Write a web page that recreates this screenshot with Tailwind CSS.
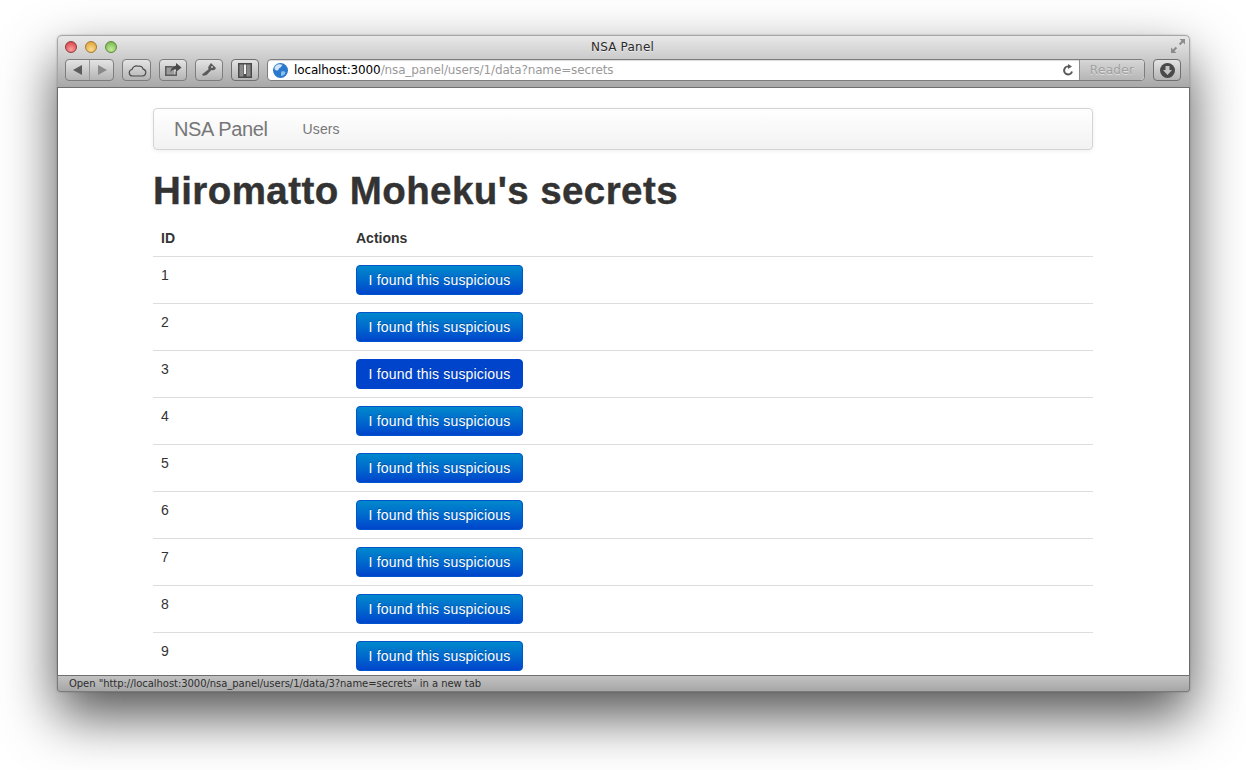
<!DOCTYPE html>
<html>
<head>
  <title>NSA Panel</title>
  <script src="https://cdn.jsdelivr.net/npm/@tailwindcss/browser@4"></script>
</head>
<body class="bg-white h-[770px] overflow-hidden pt-[35px] pl-[57px] font-['Liberation_Sans',sans-serif]">

  <!-- browser window -->
  <div class="w-[1133px] h-[657px] flex flex-col rounded-t-[5px] rounded-b-[3px] shadow-[0_24px_54px_rgba(0,0,0,0.68),0_0_2px_rgba(0,0,0,0.25)]">

    <!-- toolbar -->
    <div class="h-[52px] shrink-0 px-[7px] flex flex-col rounded-t-[5px] border border-b-0 border-[#a6a6a6] bg-gradient-to-b from-[#e8e8e8] to-[#a8a8a8]">
      <div class="h-[23px] shrink-0 pb-[2px] flex items-center relative">
        <div class="flex gap-[8px]">
          <span class="w-[12px] h-[12px] rounded-full border border-[#8c3a3a] bg-[radial-gradient(circle_at_50%_75%,#f9a0a0,#d8343c)]"></span>
          <span class="w-[12px] h-[12px] rounded-full border border-[#a07a30] bg-[radial-gradient(circle_at_50%_75%,#fbdc8e,#dd9a2c)]"></span>
          <span class="w-[12px] h-[12px] rounded-full border border-[#5f8a3c] bg-[radial-gradient(circle_at_50%_75%,#c3ec9c,#6cae42)]"></span>
        </div>
        <div class="flex-1 text-center text-[12px] tracking-[0.2px] text-[#2b2b2b] font-['DejaVu_Sans',sans-serif] pr-[54px] [text-shadow:0_1px_0_rgba(255,255,255,0.6)]">NSA Panel</div>
        <svg class="absolute right-[-3px] top-[3px]" width="14" height="14" viewBox="1 1 13 13" fill="#8c8c8c">
          <path d="M9 1h5v5l-1.800-1.800-2.500 2.500-1.400-1.400 2.500-2.500zM6 14H1V9l1.800 1.800 2.500-2.500 1.400 1.400-2.500 2.500z"/>
        </svg>
      </div>

      <div class="h-[22px] flex items-center gap-[8px]">
        <!-- back / forward -->
        <div class="w-[49px] h-[22px] flex rounded-[4px] border border-[#7d7d7d] bg-gradient-to-b from-[#e4e4e4] to-[#b4b4b4]">
          <div class="flex-1 flex items-center justify-center border-r border-[#989898]">
            <svg width="10" height="10" viewBox="0 0 10 10" fill="#5c5c5c"><path d="M9 0v10L0 5z"/></svg>
          </div>
          <div class="flex-1 flex items-center justify-center">
            <svg width="10" height="10" viewBox="0 0 10 10" fill="#8a8a8a"><path d="M1 0v10l9-5z"/></svg>
          </div>
        </div>
        <!-- icloud -->
        <div class="w-[29px] h-[22px] flex items-center justify-center rounded-[4px] border border-[#7d7d7d] bg-gradient-to-b from-[#e4e4e4] to-[#b4b4b4]">
          <svg width="20" height="13" viewBox="0 0 20 13" fill="none" stroke="#4a4a4a" stroke-width="1.200"><path d="M5 12h10.500a3.500 3.500 0 0 0 .6-6.900 3.800 3.800 0 0 0-5-2.800A4.500 4.500 0 0 0 5 5.500 3.300 3.300 0 0 0 5 12z"/></svg>
        </div>
        <!-- share -->
        <div class="w-[28px] h-[22px] flex items-center justify-center rounded-[4px] border border-[#7d7d7d] bg-gradient-to-b from-[#e4e4e4] to-[#b4b4b4]">
          <svg width="18" height="14" viewBox="0 0 18 14">
            <path d="M1 3h9v9H1z" fill="#9c9c9c"/>
            <path d="M1 3h7.500v1.500h-6v7h9v-3H13V13H1z" fill="#5c5c5c"/>
            <path d="M12 0l5.500 4.500-5.500 4.500v-2.700c-2.500 0-4.200.8-5.500 3 .2-3.700 2.300-6.300 5.500-6.500z" fill="#4a4a4a"/>
          </svg>
        </div>
        <!-- passwords -->
        <div class="w-[28px] h-[22px] flex items-center justify-center rounded-[4px] border border-[#7d7d7d] bg-gradient-to-b from-[#e4e4e4] to-[#b4b4b4]">
          <svg width="16" height="16" viewBox="0 0 16 16" fill="#5a5a5a"><path d="M10 1l5 5-1 1.500c-1 .8-2.300 .9-3.500 .4L5 13.500l-.5-.5-.8.8-.6-.6-.8.8L1 12.500l6.600-5.200C7 6 7.200 4.700 8 3.700z"/><circle cx="11" cy="5" r="1" fill="#cfcfcf"/></svg>
        </div>
        <!-- reading list -->
        <div class="w-[28px] h-[22px] flex items-center justify-center rounded-[4px] border border-[#6f6f6f] bg-gradient-to-b from-[#e4e4e4] to-[#b4b4b4]">
          <svg width="14" height="15" viewBox="0 0 14 15"><path d="M0 0h14v15H0z" fill="#4a4a4a"/><path d="M1.500 1.500h4v12h-4zM8.500 1.500h4v12h-4z" fill="#8a8a8a"/><path d="M6 1.500h2V11H6z" fill="#f0f0f0"/></svg>
        </div>
        <!-- address bar -->
        <div class="w-[878px] h-[22px] flex rounded-[4px] border border-[#7d7d7d] bg-white overflow-hidden">
          <div class="flex-1 flex items-center pl-[5px] pr-[5px] gap-[6px] shadow-[inset_0_1px_1px_rgba(0,0,0,0.15)]">
            <svg class="shrink-0" width="15" height="15" viewBox="0 0 15 15">
              <circle cx="7.500" cy="7.500" r="7.500" fill="#2b79cc"/>
              <path d="M3 2.500c2-1.500 5-1.500 6.500-.5-1 1-1.500 2.500-3 3-1 .5-.5 2-2 2.500-1 .3-2.500-.5-3-1.500 0-1.500.5-2.500 1.500-3.500z" fill="#cfe6f8"/>
              <path d="M8.500 8.500c1.500-.5 3.500 0 4 1-.5 2-2 3-4 3.500-1-1-.5-3 0-4.500z" fill="#8fc0ea"/>
            </svg>
            <span class="flex-1 text-[12px] leading-none text-[#9a9a9a] font-['DejaVu_Sans',sans-serif] tracking-[-0.13px] whitespace-nowrap"><span class="text-black">localhost:3000</span>/nsa_panel/users/1/data?name=secrets</span>
            <svg width="11" height="12" viewBox="0 0 11 12" fill="none" stroke="#5a5a5a" stroke-width="2"><path d="M9 7.500A4 4 0 1 1 6 2.500"/><path d="M5 0l4 2.500L5 5z" fill="#5a5a5a" stroke="none"/></svg>
          </div>
          <div class="w-[65px] shrink-0 flex items-center justify-center rounded-r-[4px] border-l border-[#8d8d8d] bg-gradient-to-b from-[#d6d6d6] to-[#b6b6b6] text-[12px] tracking-[0.3px] text-[#a0a0a0] font-['DejaVu_Sans',sans-serif] [text-shadow:0_1px_0_rgba(255,255,255,0.5)]">Reader</div>
        </div>
        <!-- downloads -->
        <div class="w-[28px] h-[22px] flex items-center justify-center rounded-[4px] border border-[#6f6f6f] bg-gradient-to-b from-[#e4e4e4] to-[#b4b4b4]">
          <svg width="15" height="15" viewBox="0 0 15 15"><circle cx="7.500" cy="7.500" r="7.500" fill="#4a4a4a"/><path d="M5.500 3h4v4h2.500l-4.500 5L3 7h2.500z" fill="#c4c4c4"/></svg>
        </div>
      </div>
    </div>

    <!-- page -->
    <div class="flex-1 min-h-0 overflow-hidden bg-white border-x border-[#6b6b6b] border-t border-t-[#6f6f6f] text-[14px] leading-[20px] text-[#333333]">
      <div class="w-[940px] ml-[95px]">

        <!-- navbar -->
        <div class="mt-[20px] h-[42px] flex items-center rounded-[4px] border border-[#d4d4d4] bg-gradient-to-b from-white to-[#f2f2f2] shadow-[0_1px_4px_rgba(0,0,0,0.065)]">
          <a class="ml-[20px] text-[20px] tracking-[-0.35px] font-light text-[#777777]">NSA Panel</a>
          <a class="ml-[35px] tracking-[0.1px] text-[#777777]">Users</a>
        </div>

        <h1 class="mt-[21px] text-[38.500px] leading-[40px] font-bold tracking-[0.42px] text-[#333333] [-webkit-text-stroke:0.4px_#333333]">Hiromatto Moheku's secrets</h1>

        <!-- secrets table -->
        <table class="mt-[9px] w-full border-collapse">
          <thead>
            <tr>
              <th class="w-[195px] h-[36px] px-2 text-left align-bottom pb-[8px] font-bold">ID</th>
              <th class="px-2 text-left align-bottom pb-[8px] font-bold">Actions</th>
            </tr>
          </thead>
          <tbody>
            <tr class="border-t border-[#dddddd]">
              <td class="p-2 align-top">1</td>
              <td class="p-2 align-top"><button class="block w-[167px] h-[30px] rounded-[4px] border border-[#0055cc] bg-gradient-to-b from-[#0088cc] to-[#0044cc] text-white text-center tracking-[0.18px] [text-shadow:0_-1px_0_rgba(0,0,0,0.25)]">I found this suspicious</button></td>
            </tr>
            <tr class="border-t border-[#dddddd]">
              <td class="p-2 align-top">2</td>
              <td class="p-2 align-top"><button class="block w-[167px] h-[30px] rounded-[4px] border border-[#0055cc] bg-gradient-to-b from-[#0088cc] to-[#0044cc] text-white text-center tracking-[0.18px] [text-shadow:0_-1px_0_rgba(0,0,0,0.25)]">I found this suspicious</button></td>
            </tr>
            <tr class="border-t border-[#dddddd]">
              <td class="p-2 align-top">3</td>
              <td class="p-2 align-top"><button class="block w-[167px] h-[30px] rounded-[4px] border border-[#0044cc] bg-[#0044cc] text-white text-center tracking-[0.18px] [text-shadow:0_-1px_0_rgba(0,0,0,0.25)]">I found this suspicious</button></td>
            </tr>
            <tr class="border-t border-[#dddddd]">
              <td class="p-2 align-top">4</td>
              <td class="p-2 align-top"><button class="block w-[167px] h-[30px] rounded-[4px] border border-[#0055cc] bg-gradient-to-b from-[#0088cc] to-[#0044cc] text-white text-center tracking-[0.18px] [text-shadow:0_-1px_0_rgba(0,0,0,0.25)]">I found this suspicious</button></td>
            </tr>
            <tr class="border-t border-[#dddddd]">
              <td class="p-2 align-top">5</td>
              <td class="p-2 align-top"><button class="block w-[167px] h-[30px] rounded-[4px] border border-[#0055cc] bg-gradient-to-b from-[#0088cc] to-[#0044cc] text-white text-center tracking-[0.18px] [text-shadow:0_-1px_0_rgba(0,0,0,0.25)]">I found this suspicious</button></td>
            </tr>
            <tr class="border-t border-[#dddddd]">
              <td class="p-2 align-top">6</td>
              <td class="p-2 align-top"><button class="block w-[167px] h-[30px] rounded-[4px] border border-[#0055cc] bg-gradient-to-b from-[#0088cc] to-[#0044cc] text-white text-center tracking-[0.18px] [text-shadow:0_-1px_0_rgba(0,0,0,0.25)]">I found this suspicious</button></td>
            </tr>
            <tr class="border-t border-[#dddddd]">
              <td class="p-2 align-top">7</td>
              <td class="p-2 align-top"><button class="block w-[167px] h-[30px] rounded-[4px] border border-[#0055cc] bg-gradient-to-b from-[#0088cc] to-[#0044cc] text-white text-center tracking-[0.18px] [text-shadow:0_-1px_0_rgba(0,0,0,0.25)]">I found this suspicious</button></td>
            </tr>
            <tr class="border-t border-[#dddddd]">
              <td class="p-2 align-top">8</td>
              <td class="p-2 align-top"><button class="block w-[167px] h-[30px] rounded-[4px] border border-[#0055cc] bg-gradient-to-b from-[#0088cc] to-[#0044cc] text-white text-center tracking-[0.18px] [text-shadow:0_-1px_0_rgba(0,0,0,0.25)]">I found this suspicious</button></td>
            </tr>
            <tr class="border-t border-[#dddddd]">
              <td class="p-2 align-top">9</td>
              <td class="p-2 align-top"><button class="block w-[167px] h-[30px] rounded-[4px] border border-[#0055cc] bg-gradient-to-b from-[#0088cc] to-[#0044cc] text-white text-center tracking-[0.18px] [text-shadow:0_-1px_0_rgba(0,0,0,0.25)]">I found this suspicious</button></td>
            </tr>
          </tbody>
        </table>
      </div>
    </div>

    <!-- status bar -->
    <div class="h-[17px] shrink-0 flex items-center pl-[11px] rounded-b-[3px] border border-t-[#6f6f6f] border-[#7a7a7a] bg-gradient-to-b from-[#c2c2c2] to-[#a6a6a6] text-[10px] text-[#2e2e2e] font-['DejaVu_Sans',sans-serif] tracking-[-0.05px] whitespace-nowrap">Open "http://localhost:3000/nsa_panel/users/1/data/3?name=secrets" in a new tab</div>
  </div>

</body>
</html>
